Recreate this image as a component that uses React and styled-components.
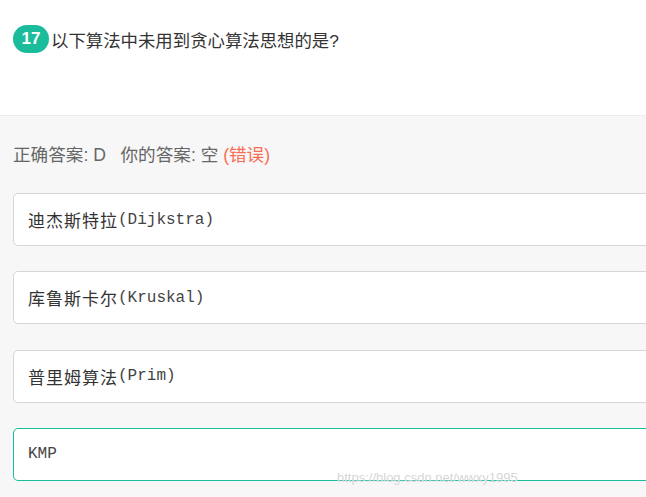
import React from "react";
import styled, { createGlobalStyle } from "styled-components";

const GlobalStyle = createGlobalStyle`
  html, body {
    margin: 0;
    padding: 0;
    background: #f7f7f7;
    overflow: hidden;
  }
  body {
    font-family: "Liberation Sans", "Noto Sans CJK SC", sans-serif;
  }
`;

const options = [
  { cn: "迪杰斯特拉", code: "(Dijkstra)" },
  { cn: "库鲁斯卡尔", code: "(Kruskal)" },
  { cn: "普里姆算法", code: "(Prim)" },
  { cn: "", code: "KMP", picked: true },
];

function App() {
  return (
    <>
      <GlobalStyle />
      <Page>
        <Header>
          <QuestionRow>
            <Badge>17</Badge>
            <Question>以下算法中未用到贪心算法思想的是?</Question>
          </QuestionRow>
        </Header>
        <Body>
          <AnswerLine>
            正确答案: D&nbsp;&nbsp;&nbsp;你的答案: 空 <Wrong>(错误)</Wrong>
          </AnswerLine>
          <OptionList>
            {options.map((o) => (
              <Option key={o.code} $picked={o.picked}>
                {o.cn && <CnLabel>{o.cn}</CnLabel>}
                {o.code}
              </Option>
            ))}
          </OptionList>
        </Body>
        <Watermark>https://blog.csdn.net/wwxy1995</Watermark>
      </Page>
    </>
  );
}

const Page = styled.div`
  position: relative;
  width: 646px;
  height: 497px;
  background: #f7f7f7;
`;

const Header = styled.div`
  height: 116px;
  box-sizing: border-box;
  background: #fff;
  border-bottom: 1px solid #ececec;
  padding: 25px 0 0 13px;
`;

const QuestionRow = styled.div`
  display: flex;
  align-items: center;
  gap: 2px;
`;

const Badge = styled.span`
  display: inline-flex;
  align-items: center;
  justify-content: center;
  width: 36px;
  height: 28px;
  border-radius: 14px;
  background: #1abc9c;
  color: #fff;
  font-weight: bold;
  font-size: 17px;
`;

const Question = styled.span`
  font-size: 17.4px;
  color: #333;
`;

const Body = styled.div`
  padding: 27px 0 0 13px;
`;

const AnswerLine = styled.div`
  font-size: 17.6px;
  line-height: 24px;
  color: #666;
  margin-bottom: 26px;
`;

const Wrong = styled.span`
  color: #f86e55;
`;

const OptionList = styled.div`
  display: flex;
  flex-direction: column;
  gap: 25.3px;
  margin-right: -30px;
`;

const Option = styled.div`
  display: flex;
  align-items: center;
  height: 53px;
  box-sizing: border-box;
  padding-left: 14px;
  background: #fff;
  border: 1px solid ${(p) => (p.$picked ? "#1abc9c" : "#d6d6d6")};
  border-radius: 5px;
  font-family: "Liberation Mono", "Noto Sans CJK SC", monospace;
  font-size: 16px;
  color: #444;
  white-space: pre;
`;

const CnLabel = styled.span`
  font-family: "Noto Sans CJK SC", sans-serif;
  font-size: 17px;
  letter-spacing: 1px;
  color: #333;
`;

const Watermark = styled.div`
  position: absolute;
  left: 337px;
  top: 470px;
  font-size: 13px;
  color: rgba(200, 200, 200, 0.75);
  text-shadow: 0 0 1px #fff;
`;

export default App;
